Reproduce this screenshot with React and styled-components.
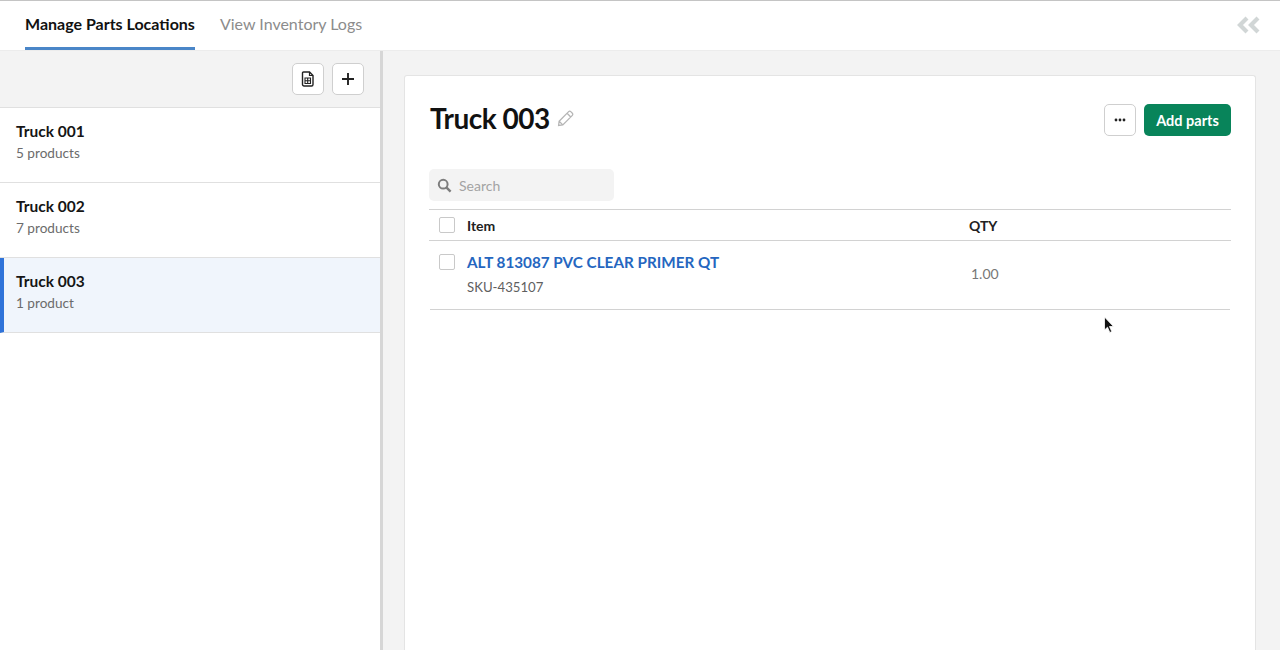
import React from "react";
import styled, { createGlobalStyle } from "styled-components";

const Global = createGlobalStyle`
  html, body { margin: 0; padding: 0; height: 100%; overflow: hidden; }
  #root { height: 100%; }
  * { box-sizing: border-box; }
  body { font-family: Lato, "Open Sans", "Liberation Sans", sans-serif; color: #111; background: #fff; }
`;

const Page = styled.div`
  position: relative;
  width: 1280px;
  height: 650px;
  display: flex;
  flex-direction: column;
  overflow: hidden;
  border-top: 1px solid #c4c4c4;
`;
const TopBar = styled.header`
  height: 50px;
  flex: none;
  display: flex;
  align-items: stretch;
  justify-content: space-between;
  padding: 0 19px 0 25px;
  background: #fff;
  border-bottom: 1px solid #ececec;
`;
const Tabs = styled.nav`
  display: flex;
  gap: 25px;
`;
const Tab = styled.a`
  height: 49px;
  padding-top: 13px;
  font-size: 16px;
  line-height: 20px;
  font-weight: ${p => (p.$active ? 700 : 400)};
  color: ${p => (p.$active ? "#111" : "#8c8c8c")};
  border-bottom: 3px solid ${p => (p.$active ? "#4a86c8" : "transparent")};
`;
const Collapse = styled.span`
  display: flex;
  align-items: center;
  height: 49px;
  padding-bottom: 1px;
`;
const Body = styled.div`
  flex: 1;
  display: flex;
  min-height: 0;
  background: #f3f3f3;
`;
const Sidebar = styled.aside`
  width: 383px;
  flex: none;
  display: flex;
  flex-direction: column;
  background: #fff;
  border-right: 3px solid #d6d6d6;
`;
const SideTools = styled.div`
  height: 57px;
  flex: none;
  display: flex;
  justify-content: flex-end;
  align-items: flex-start;
  gap: 8px;
  padding: 12px 16px 0 0;
  background: #f3f3f3;
  border-bottom: 1px solid #e0e0e0;
`;
const IconButton = styled.button`
  width: 32px;
  height: 32px;
  padding: 0;
  display: flex;
  align-items: center;
  justify-content: center;
  background: #fff;
  border: 1px solid #cfcfcf;
  border-radius: 5px;
`;
const LocationRow = styled.div`
  height: 75px;
  padding: 13px 0 0 ${p => (p.$active ? "12px" : "16px")};
  background: ${p => (p.$active ? "#f0f5fc" : "#fff")};
  border-left: ${p => (p.$active ? "4px solid #2f73d9" : "none")};
  border-bottom: 1px solid #e0e0e0;
`;
const LocationName = styled.div`
  font-size: 15.5px;
  line-height: 20px;
  font-weight: 700;
  color: #151515;
`;
const LocationCount = styled.div`
  margin-top: 2px;
  font-size: 13.6px;
  line-height: 20px;
  color: #6b6b6b;
`;
const Main = styled.main`
  flex: 1;
  padding: 24px 24px 0 21px;
  min-width: 0;
`;
const Card = styled.section`
  height: 100%;
  background: #fff;
  border: 1px solid #e4e4e4;
  border-bottom: none;
  border-radius: 3px 3px 0 0;
  padding: 28px 24px 0 25px;
`;
const CardHead = styled.div`
  display: flex;
  justify-content: space-between;
  align-items: flex-start;
  height: 65px;
`;
const TitleRow = styled.div`
  display: flex;
  align-items: center;
  gap: 7px;
  height: 28px;
`;
const Title = styled.h1`
  margin: 0;
  font-size: 28px;
  line-height: 28px;
  font-weight: 700;
  letter-spacing: -0.5px;
  color: #111;
`;
const Actions = styled.div`
  display: flex;
  gap: 8px;
`;
const AddButton = styled.button`
  width: 87px;
  height: 32px;
  padding: 0;
  background: #08845a;
  color: #fff;
  border: none;
  border-radius: 5px;
  font: 700 14.5px Lato, sans-serif;
`;
const SearchBox = styled.div`
  width: 185px;
  height: 32px;
  display: flex;
  align-items: center;
  gap: 7px;
  padding-left: 8px;
  margin-left: -1px;
  background: #f3f3f3;
  border-radius: 5px;
  font-size: 14px;
  color: #a3a3a3;
`;
const Table = styled.div`
  margin-top: 8px;
  margin-left: -1px;
`;
const HeadRow = styled.div`
  display: grid;
  grid-template-columns: 28px 502px 1fr;
  height: 32px;
  align-items: center;
  padding-left: 10px;
  border-top: 1px solid #d2d2d2;
  border-bottom: 1px solid #d2d2d2;
  font-size: 14px;
  font-weight: 700;
  color: #222;
`;
const ItemRow = styled.div`
  display: grid;
  grid-template-columns: 28px 502px 1fr;
  height: 69px;
  margin: 0 1px;
  padding-left: 9px;
  border-bottom: 1px solid #d2d2d2;
`;
const Check = styled.span`
  display: block;
  width: 16px;
  height: 16px;
  background: #fff;
  border: 1px solid #c9c9c9;
  border-radius: 2px;
`;
const CheckCell = styled.div`
  padding-top: ${p => p.$top || 0}px;
`;
const ItemName = styled.a`
  display: block;
  margin-top: 11px;
  font-size: 15.25px;
  line-height: 20px;
  font-weight: 700;
  color: #2566c0;
`;
const Sku = styled.div`
  margin-top: 5px;
  font-size: 13.2px;
  line-height: 20px;
  color: #5f5f5f;
`;
const Qty = styled.div`
  align-self: center;
  padding: 0 0 3px 2px;
  font-size: 14px;
  color: #777;
`;
const Pointer = styled.svg`
  position: absolute;
  left: 1103px;
  top: 315px;
`;

export default function App() {
  return (
    <Page>
      <Global />
      <TopBar>
        <Tabs>
          <Tab $active>Manage Parts Locations</Tab>
          <Tab>View Inventory Logs</Tab>
        </Tabs>
        <Collapse>
          <svg width="24" height="18" viewBox="0 0 24 18">
            <path d="M10 2 L3 9 L10 16" fill="none" stroke="#d1d6d6" strokeWidth="4.2" />
            <path d="M21 2 L14 9 L21 16" fill="none" stroke="#d1d6d6" strokeWidth="4.2" />
          </svg>
        </Collapse>
      </TopBar>
      <Body>
        <Sidebar>
          <SideTools>
            <IconButton aria-label="Export">
              <svg width="14" height="16" viewBox="0 0 14 16">
                <path d="M2.5 1 H8.5 L12 4.5 V13.5 A1.5 1.5 0 0 1 10.5 15 H3 A1.5 1.5 0 0 1 1.5 13.5 V2 A1 1 0 0 1 2.5 1 Z" fill="none" stroke="#222" strokeWidth="1.4" />
                <path d="M8.5 1 V4.5 H12" fill="none" stroke="#222" strokeWidth="1.2" />
                <path d="M4 7 H9.5 V12.5 H4 Z M4 9.7 H9.5 M6.7 7 V12.5" fill="none" stroke="#222" strokeWidth="1.1" />
              </svg>
            </IconButton>
            <IconButton aria-label="Add">
              <svg width="14" height="14" viewBox="0 0 14 14">
                <path d="M7 1 V13 M1 7 H13" stroke="#222" strokeWidth="1.9" />
              </svg>
            </IconButton>
          </SideTools>
          <LocationRow>
            <LocationName>Truck 001</LocationName>
            <LocationCount>5 products</LocationCount>
          </LocationRow>
          <LocationRow>
            <LocationName>Truck 002</LocationName>
            <LocationCount>7 products</LocationCount>
          </LocationRow>
          <LocationRow $active>
            <LocationName>Truck 003</LocationName>
            <LocationCount>1 product</LocationCount>
          </LocationRow>
        </Sidebar>
        <Main>
          <Card>
            <CardHead>
              <TitleRow>
                <Title>Truck 003</Title>
                <svg width="18" height="18" viewBox="0 0 17 17">
                  <path d="M2 11.5 L11 2.5 A1.4 1.4 0 0 1 13 2.5 L14.5 4 A1.4 1.4 0 0 1 14.5 6 L5.5 15 L1.5 15.5 Z M9.5 4 L13 7.5 M2 11.5 L5.5 15" fill="none" stroke="#b5b5b5" strokeWidth="1.2" />
                </svg>
              </TitleRow>
              <Actions>
                <IconButton aria-label="More">
                  <svg width="12" height="4" viewBox="0 0 12 4">
                    <circle cx="2" cy="2" r="1.4" fill="#222" />
                    <circle cx="6" cy="2" r="1.4" fill="#222" />
                    <circle cx="10" cy="2" r="1.4" fill="#222" />
                  </svg>
                </IconButton>
                <AddButton>Add parts</AddButton>
              </Actions>
            </CardHead>
            <SearchBox>
              <svg width="15" height="15" viewBox="0 0 15 15">
                <circle cx="6.2" cy="6.2" r="4.4" fill="none" stroke="#7d7d7d" strokeWidth="2" />
                <path d="M9.6 9.6 L13.6 13.6" stroke="#7d7d7d" strokeWidth="2.4" />
              </svg>
              Search
            </SearchBox>
            <Table>
              <HeadRow>
                <Check />
                <span>Item</span>
                <span>QTY</span>
              </HeadRow>
              <ItemRow>
                <CheckCell $top={13}>
                  <Check />
                </CheckCell>
                <div>
                  <ItemName>ALT 813087 PVC CLEAR PRIMER QT</ItemName>
                  <Sku>SKU-435107</Sku>
                </div>
                <Qty>1.00</Qty>
              </ItemRow>
            </Table>
          </Card>
        </Main>
      </Body>
      <Pointer width="12" height="18" viewBox="0 0 12 18">
        <path d="M1.5 1 V14 L4.5 11.2 L6.8 16.5 L8.8 15.6 L6.5 10.5 H10.5 Z" fill="#111" stroke="#fff" strokeWidth="0.8" />
      </Pointer>
    </Page>
  );
}
